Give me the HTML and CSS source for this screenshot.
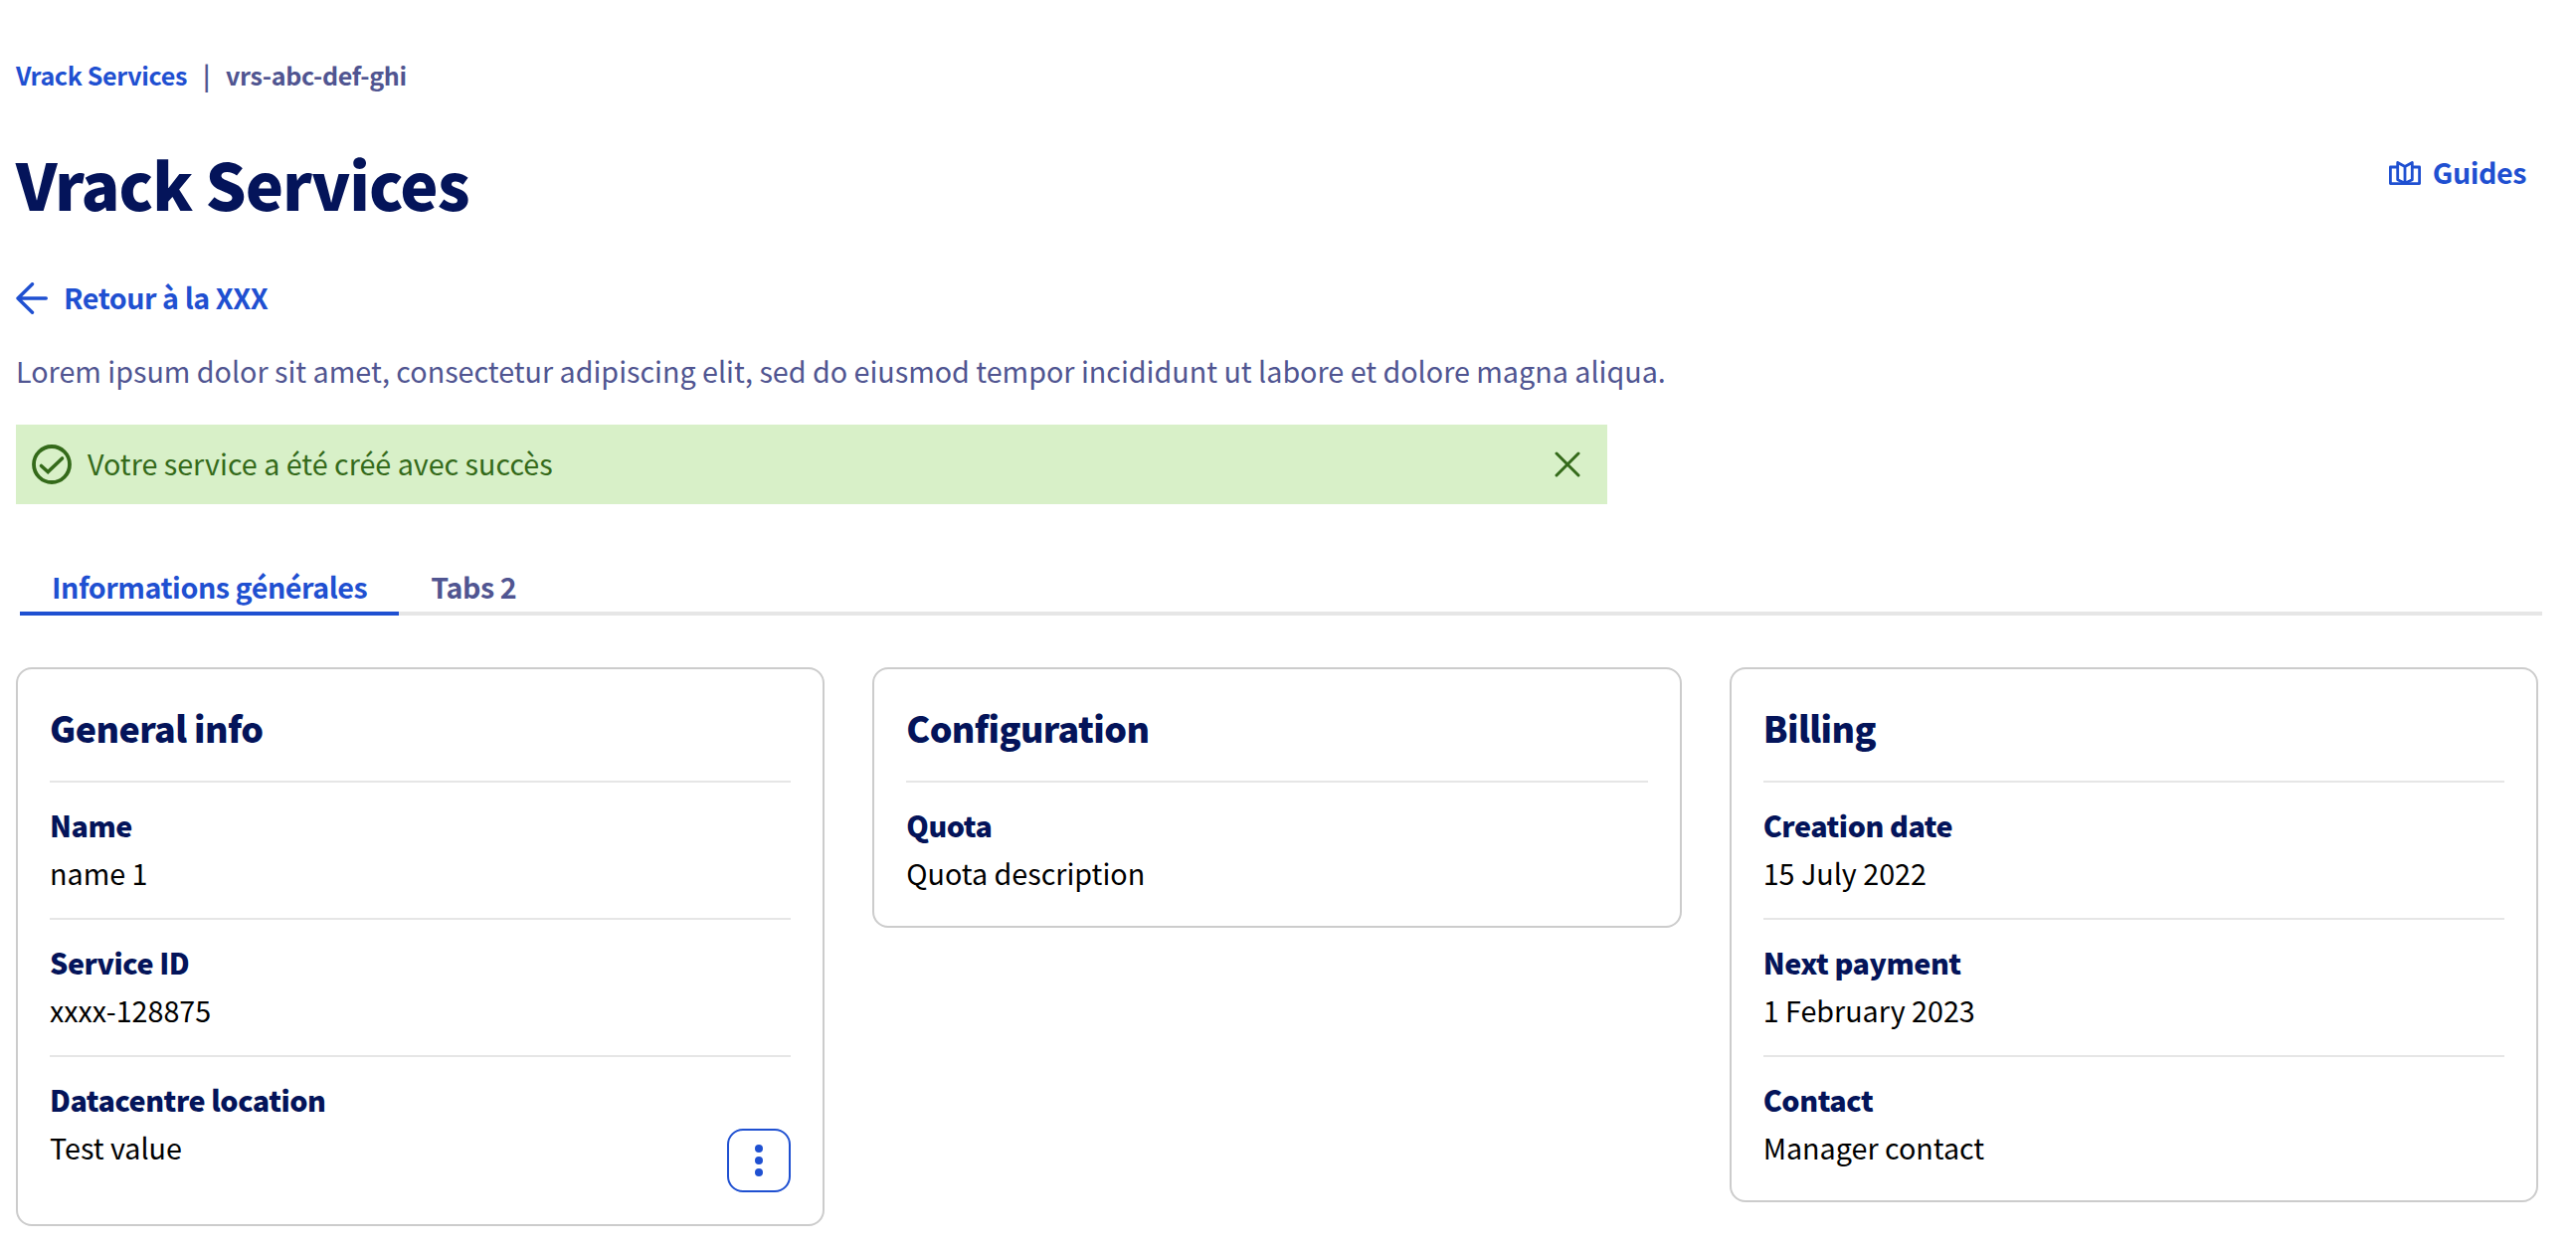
FILE: index.html
```
<!DOCTYPE html>
<html lang="fr">
<head>
<meta charset="utf-8">
<title>Vrack Services</title>
<link rel="stylesheet" href="styles.css">
</head>
<body>
<main class="page">
  <nav class="breadcrumb"><a class="crumb-link">Vrack Services</a><span class="crumb-sep">|</span><span class="crumb-current">vrs-abc-def-ghi</span></nav>
  <header class="header">
    <h1 class="title">Vrack Services</h1>
    <a class="guides"><svg class="guides-icon" viewBox="0 0 32 24" fill="none" stroke="currentColor" stroke-width="2.8" stroke-linejoin="round"><path d="M8.500 6H1.400V22.600H30.600V6H23.500"/><path d="M8.700 1.500L16 5.500L23.300 1.500V18.800L16 22.300L8.700 18.800ZM16 5.500V22.300"/></svg><span class="icon-label">Guides</span></a>
  </header>
  <a class="back"><svg class="back-icon" viewBox="0 0 32 32" fill="none" stroke="currentColor" stroke-width="3.400" stroke-linecap="round" stroke-linejoin="round"><path d="M30.300 16H2M16.500 1.700L2 16L16.500 30.300"/></svg><span class="icon-label">Retour à la XXX</span></a>
  <p class="description">Lorem ipsum dolor sit amet, consectetur adipiscing elit, sed do eiusmod tempor incididunt ut labore et dolore magna aliqua.</p>
  <div class="message">
    <svg class="message-icon" viewBox="0 0 40 40" fill="none" stroke="currentColor" stroke-width="3.800"><circle cx="20" cy="20" r="18"/><path stroke-width="3.600" stroke-linecap="round" d="M9.500 21.500L16.200 27.500L30.500 14"/></svg>
    <span class="message-text">Votre service a été créé avec succès</span>
    <svg class="close-icon" viewBox="0 0 26 26" fill="none" stroke="currentColor" stroke-width="3" stroke-linecap="round"><path d="M2 2L24 24M24 2L2 24"/></svg>
  </div>
  <div class="tabs"><a class="tab tab-active">Informations générales</a><a class="tab">Tabs 2</a></div>
  <section class="cards">
    <article class="card">
      <h2 class="card-title">General info</h2>
      <dl class="field"><dt class="label">Name</dt><dd class="value">name 1</dd></dl>
      <dl class="field"><dt class="label">Service ID</dt><dd class="value">xxxx-128875</dd></dl>
      <dl class="field"><dt class="label">Datacentre location</dt><dd class="value value-action">Test value<button class="menu-button" aria-label="Actions"><svg class="menu-icon" viewBox="0 0 8 32" fill="currentColor"><circle cx="4" cy="4" r="4"/><circle cx="4" cy="16" r="4"/><circle cx="4" cy="28" r="4"/></svg></button></dd></dl>
    </article>
    <article class="card">
      <h2 class="card-title">Configuration</h2>
      <dl class="field"><dt class="label">Quota</dt><dd class="value">Quota description</dd></dl>
    </article>
    <article class="card">
      <h2 class="card-title">Billing</h2>
      <dl class="field"><dt class="label">Creation date</dt><dd class="value">15 July 2022</dd></dl>
      <dl class="field"><dt class="label">Next payment</dt><dd class="value">1 February 2023</dd></dl>
      <dl class="field"><dt class="label">Contact</dt><dd class="value">Manager contact</dd></dl>
    </article>
  </section>
</main>
</body>
</html>
```

FILE: styles.css
```
* { box-sizing: border-box; }
body { margin: 0; background: #fff; font-family: "Noto Sans CJK SC", sans-serif; font-size: 28.7px; color: #000; }
h1, h2, p, dl, dd { margin: 0; }
svg { flex: none; }
.page { padding: 55px 38px 0 16px; }
.breadcrumb { display: flex; font-size: 25.07px; line-height: 40px; font-weight: 700; letter-spacing: -0.014em; }
.crumb-link { color: #1f50d1; }
.crumb-sep { width: 39px; text-align: center; color: #505591; }
.crumb-current { color: #505591; }
.header { display: flex; justify-content: space-between; margin-top: 45px; height: 88px; }
.title { font-size: 64.5px; line-height: 88px; font-weight: 900; letter-spacing: -0.017em; color: #04145a; }
.guides { display: flex; align-items: center; height: 68px; gap: 12px; padding-right: 12px; color: #1f50d1; font-weight: 700; letter-spacing: -0.016em; }
.guides-icon { width: 32px; height: 24px; }
.icon-label { line-height: 42px; padding-bottom: 3px; }
.back { display: flex; align-items: center; gap: 16px; height: 48px; margin-top: 48px; color: #1f50d1; font-weight: 700; letter-spacing: -0.016em; }
.back-icon { width: 32px; height: 32px; }
.description { margin-top: 25px; line-height: 48px; color: #505591; }
.message { display: flex; align-items: center; width: 1600px; height: 80px; margin-top: 30px; padding: 0 27px 0 16px; background: #d8f0c8; color: #346a1a; }
.message-icon { width: 40px; height: 40px; }
.message-text { flex: 1; margin-left: 16px; line-height: 42px; padding-bottom: 3px; }
.close-icon { width: 26px; height: 26px; }
.tabs { display: flex; margin: 52px -4px 0 4px; height: 60px; border-bottom: 4px solid #e6e6e6; }
.tab { height: 60px; padding: 7px 32px 0; line-height: 48px; font-weight: 700; letter-spacing: -0.016em; color: #505591; }
.tab-active { color: #1f50d1; border-bottom: 4px solid #1f50d1; }
.cards { display: grid; grid-template-columns: repeat(3, 1fr); gap: 48px; align-items: start; margin-top: 52px; }
.card { border: 2px solid #ccc; border-radius: 16px; padding: 30px 32px 29px; }
.card-title { font-size: 35.8px; line-height: 56px; padding-bottom: 26px; font-weight: 900; letter-spacing: -0.016em; color: #04145a; }
.field { border-top: 2px solid #e6e6e6; padding-top: 19px; height: 138px; }
.field:last-child { height: auto; }
.label { line-height: 48px; font-weight: 900; letter-spacing: -0.015em; color: #04145a; }
.value { line-height: 48px; }
.value-action { display: flex; justify-content: space-between; }
.menu-button { display: flex; align-items: center; justify-content: center; width: 64px; height: 64px; margin: 5px 0 3px; padding: 0; border: 2px solid #1f50d1; border-radius: 16px; background: #fff; color: #1f50d1; }
.menu-icon { width: 8px; height: 32px; }
```
